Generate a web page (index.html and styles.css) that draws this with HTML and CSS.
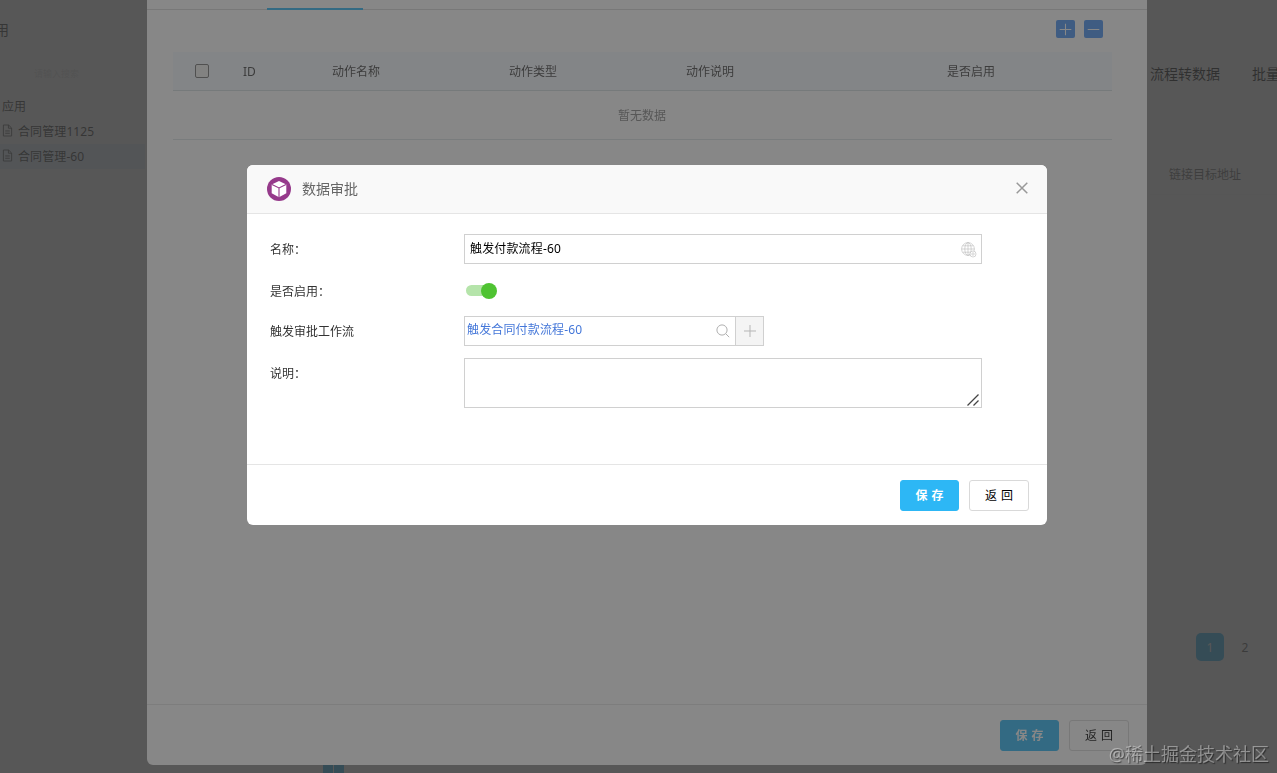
FILE: index.html
```
<!DOCTYPE html>
<html lang="zh-CN">
<head>
<meta charset="UTF-8">
<meta name="viewport" content="width=device-width, initial-scale=1.0">
<title>数据审批</title>
<link rel="stylesheet" href="styles.css">
</head>
<body>

<!-- Page behind the dialogs -->
<div class="page">
<aside class="sidebar">
<div class="sidebar-title">应用</div>
<div class="sidebar-search">请输入搜索</div>
<div class="tree-root">应用</div>
<div class="tree-item">
<svg class="doc-icon" viewBox="0 0 12 14"><path d="M1.5 1h5.7l3.3 3.3V13h-9zM7 1v3.5h3.5M3.5 7.5h5M3.5 10h5"/></svg>
<span>合同管理1125</span>
</div>
<div class="tree-item active">
<svg class="doc-icon" viewBox="0 0 12 14"><path d="M1.5 1h5.7l3.3 3.3V13h-9zM7 1v3.5h3.5M3.5 7.5h5M3.5 10h5"/></svg>
<span>合同管理-60</span>
</div>
</aside>
<main class="content">
<nav class="content-tabs"><span>流程转数据</span><span>批量</span></nav>
<div class="content-head">链接目标地址</div>
<div class="pagination"><span class="page-no current">1</span><span class="page-no">2</span></div>
</main>
<div class="page-marks"><i></i><i></i></div>
</div>

<div class="mask"></div>

<!-- Action list panel -->
<section class="panel">
<div class="panel-tabs"><div class="tab-line"></div></div>
<div class="panel-body">
<div class="toolbar">
<button class="tool-btn"><svg viewBox="0 0 18 18"><path d="M3.5 9h11M9 3.5v11"/></svg></button>
<button class="tool-btn"><svg viewBox="0 0 18 18"><path d="M3.5 9h11"/></svg></button>
</div>
<div class="table">
<div class="table-head">
<div class="cell-check"><span class="checkbox"></span></div>
<div class="cell">ID</div>
<div class="cell">动作名称</div>
<div class="cell">动作类型</div>
<div class="cell">动作说明</div>
<div class="cell">是否启用</div>
</div>
<div class="table-empty">暂无数据</div>
</div>
</div>
<div class="footer">
<button class="btn primary">保 存</button>
<button class="btn">返 回</button>
</div>
</section>

<div class="mask"></div>

<!-- Data approval dialog -->
<section class="dialog">
<header class="dialog-head">
<svg class="logo" viewBox="0 0 24 24"><circle cx="12" cy="12" r="12" fill="#963a8b"/><path d="M12 4L19.3 7.4v8.9L12 20.3l-7.3-4V7.4z" fill="#fff"/><path d="M5 7.6l7 3.4 7-3.4M12 11v9.3" fill="none" stroke="#963a8b" stroke-width="1.1"/></svg>
<h1>数据审批</h1>
<svg class="close" viewBox="0 0 12 12"><path d="M.7.7l10.6 10.6M11.3.7L.7 11.3"/></svg>
</header>
<div class="dialog-body">
<div class="row">
<label>名称：</label>
<div class="field">
<span>触发付款流程-60</span>
<svg class="globe" viewBox="0 0 16 16"><circle cx="7" cy="7" r="6.4"/><ellipse cx="7" cy="7" rx="3.2" ry="6.4"/><path d="M7 .6v12.8M.6 7h12.8M1.6 3.8h10.8M1.6 10.2h9"/><circle class="gear" cx="12" cy="12" r="3"/><circle cx="12" cy="12" r="1.2"/></svg>
</div>
</div>
<div class="row row-switch">
<label>是否启用：</label>
<div class="switch"></div>
</div>
<div class="row">
<label>触发审批工作流</label>
<div class="browser">
<div class="browser-value">
<span>触发合同付款流程-60</span>
<svg class="search" viewBox="0 0 14 14"><circle cx="6" cy="6" r="5.1"/><path d="M9.7 9.7l3.5 3.5"/></svg>
</div>
<button class="browser-add"><svg viewBox="0 0 12 12"><path d="M0 6h12M6 0v12"/></svg></button>
</div>
</div>
<div class="row row-area">
<label>说明：</label>
<div class="area">
<svg viewBox="0 0 12 12"><path d="M.5 11.5l11-11M6.5 11.5l5-5"/></svg>
</div>
</div>
</div>
<div class="footer">
<button class="btn primary">保 存</button>
<button class="btn">返 回</button>
</div>
</section>

<div class="watermark">@稀土掘金技术社区</div>

</body>
</html>
```
FILE: styles.css
```
* {
box-sizing: border-box;
}
body {
margin: 0;
height: 773px;
overflow: hidden;
font-family: "Noto Sans", "Noto Sans CJK SC", sans-serif;
font-size: 12px;
line-height: 18px;
color: #333;
background: #fff;
}
svg {
display: block;
fill: none;
}
button {
font-family: inherit;
padding: 0;
}

/* Page behind */
.page {
display: flex;
justify-content: space-between;
height: 773px;
position: relative;
}
.sidebar {
width: 145px;
padding-top: 20px;
}
.sidebar-title {
margin-left: -19px;
font-size: 14px;
line-height: 20px;
}
.sidebar-search {
margin: 25px 0 15px;
padding-left: 34px;
font-size: 9px;
color: #dedede;
}
.tree-root {
height: 21px;
padding-left: 2px;
}
.tree-item {
display: flex;
align-items: center;
height: 25px;
padding-left: 2px;
letter-spacing: .1px;
}
.tree-item.active {
background: #e6f2ff;
}
.doc-icon {
width: 11px;
height: 13px;
margin: -2px 5px 0 0;
stroke: #555;
}
.content {
width: 130px;
padding: 64px 0 0 3px;
display: flex;
flex-direction: column;
}
.content-tabs {
display: flex;
gap: 32px;
font-size: 14px;
line-height: 20px;
white-space: nowrap;
color: #111;
}
.content-head {
margin-top: 69px;
height: 42px;
padding: 13px 0 0 19px;
color: #666;
background: #fbfbfb;
border-bottom: 1px solid #f4f4f4;
}
.pagination {
display: flex;
gap: 7px;
margin: 438px 0 0 46px;
}
.page-no {
width: 28px;
height: 28px;
border-radius: 5px;
line-height: 29px;
text-align: center;
color: #555;
}
.page-no.current {
background: #2db7f5;
color: #fff;
}
.page-marks {
position: absolute;
left: 323px;
bottom: 0;
display: flex;
gap: 1px;
}
.page-marks i {
width: 10px;
height: 8px;
background: #2db7f5;
}

.mask {
position: fixed;
inset: 0;
background: rgba(55, 55, 55, .6);
}

/* Action list panel */
.panel {
position: fixed;
top: 0;
left: 147px;
width: 1000px;
height: 765px;
display: flex;
flex-direction: column;
background: #fff;
border-radius: 0 0 6px 6px;
}
.panel-tabs {
height: 10px;
padding: 8px 0 0 120px;
border-bottom: 1px solid #d9d9d9;
}
.tab-line {
width: 96px;
height: 2px;
background: #2db7f5;
}
.panel-body {
flex: 1;
padding: 10px 35px 0 26px;
}
.toolbar {
display: flex;
justify-content: flex-end;
gap: 9px;
padding-right: 9px;
}
.tool-btn {
width: 19px;
height: 18px;
border: 0;
border-radius: 2px;
background: #4b94f2;
}
.tool-btn svg {
stroke: #fff;
}
.table {
margin-top: 14px;
}
.table-head {
display: grid;
grid-template-columns: 58px 89px 177px 177px 261px 177px;
align-items: center;
height: 39px;
background: #f6faff;
border-bottom: 1px solid #d5dfe2;
color: #444;
}
.cell {
padding: 2px 0 0 12px;
}
.checkbox {
display: block;
width: 14px;
height: 14px;
margin: 0 auto;
border: 1px solid #777;
border-radius: 2px;
background: #f2f2f0;
}
.table-empty {
height: 49px;
padding-right: 1px;
line-height: 50px;
text-align: center;
color: #888;
border-bottom: 1px solid #dce3e5;
}

/* Footer shared by both dialogs */
.footer {
display: flex;
justify-content: flex-end;
gap: 10px;
height: 61px;
padding: 15px 18px;
border-top: 1px solid #e5e5e5;
}
.btn {
width: 60px;
height: 31px;
padding-bottom: 2px;
font-size: 12px;
word-spacing: 1px;
border: 1px solid #d9d9d9;
border-radius: 3px;
background: #fff;
color: #000;
}
.btn.primary {
width: 59px;
border-color: #2db7f5;
background: #2db7f5;
color: #fff;
font-weight: bold;
}

/* Data approval dialog */
.dialog {
position: fixed;
top: 165px;
left: 247px;
width: 800px;
height: 360px;
display: flex;
flex-direction: column;
background: #fff;
border-radius: 6px;
overflow: hidden;
}
.dialog-head {
display: flex;
align-items: center;
height: 49px;
padding: 0 19px 0 20px;
background: #f9f9f9;
border-bottom: 1px solid #e5e5e5;
}
.logo {
width: 24px;
height: 24px;
}
.dialog-head h1 {
margin: 0 auto 0 11px;
font-size: 14px;
font-weight: normal;
color: #666;
}
.close {
width: 12px;
height: 12px;
margin-top: -3px;
stroke: #999;
stroke-width: 1.5;
}
.dialog-body {
flex: 1;
padding: 20px 65px 0 23px;
}
.row {
display: flex;
align-items: center;
height: 30px;
margin-bottom: 12px;
}
.row label {
width: 194px;
padding-top: 2px;
}
.row-switch {
margin-bottom: 10px;
}
.field {
display: flex;
align-items: center;
justify-content: space-between;
width: 518px;
height: 30px;
padding: 0 4px 0 5px;
border: 1px solid #d0d0d0;
color: #000;
letter-spacing: .15px;
}
.globe {
width: 16px;
height: 16px;
margin-top: 2px;
stroke: #bbb;
stroke-width: .6;
}
.gear {
fill: #fff;
}
.switch {
position: relative;
width: 30px;
height: 11px;
margin: -1px 0 0 2px;
border-radius: 6px;
background: #b5e4aa;
}
.switch::after {
content: "";
position: absolute;
top: -2px;
right: -1px;
width: 16px;
height: 16px;
border-radius: 50%;
background: #4fc332;
}
.browser {
display: flex;
width: 300px;
height: 30px;
border: 1px solid #d0d0d0;
}
.browser-value {
flex: 1;
display: flex;
align-items: center;
justify-content: space-between;
padding: 0 5px 0 2px;
color: #4477d9;
letter-spacing: .15px;
}
.browser-value span {
margin-top: -2px;
}
.search {
width: 14px;
height: 14px;
stroke: #b0b0b0;
}
.browser-add {
width: 28px;
display: flex;
align-items: center;
justify-content: center;
border: 0;
border-left: 1px solid #d0d0d0;
background: #f4f4f4;
}
.browser-add svg {
width: 12px;
height: 12px;
stroke: #b5b5b5;
}
.row-area {
height: 50px;
align-items: flex-start;
}
.row-area label {
padding-top: 7px;
}
.area {
display: flex;
align-items: flex-end;
justify-content: flex-end;
width: 518px;
height: 50px;
padding: 1px 2px 1px 1px;
border: 1px solid #d0d0d0;
}
.area svg {
width: 12px;
height: 12px;
stroke: #444;
stroke-width: 1.3;
}

.watermark {
position: fixed;
right: 8px;
bottom: 6px;
font-size: 18px;
line-height: 26px;
color: rgba(255, 255, 255, .4);
text-shadow: 1px 1px 1px rgba(0, 0, 0, .5);
}
```
